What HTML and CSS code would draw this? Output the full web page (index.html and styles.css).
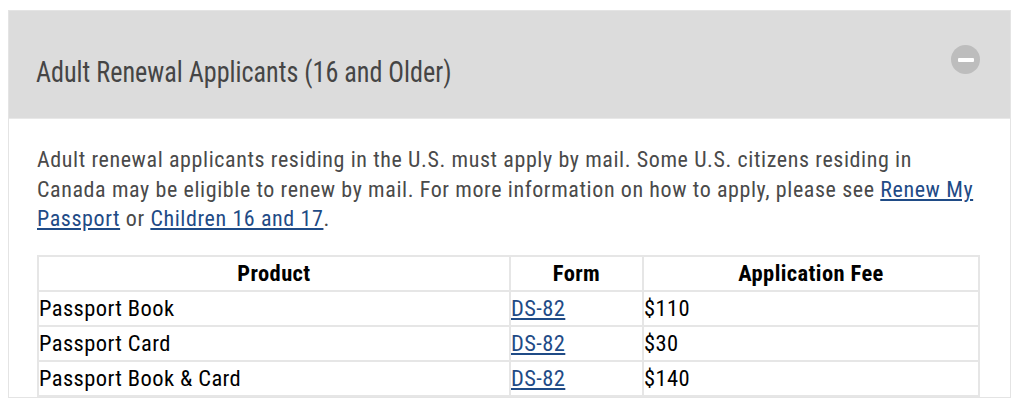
FILE: index.html
```html
<!DOCTYPE html>
<html lang="en">
<head>
<meta charset="utf-8">
<title>Adult Renewal Applicants</title>
<link rel="stylesheet" href="styles.css">
</head>
<body>
<section class="panel">
  <div class="panel-head">
    <h2 class="panel-title">Adult Renewal Applicants (16 and Older)</h2>
    <span class="toggle" aria-label="Collapse"><span class="toggle-bar"></span></span>
  </div>
  <div class="panel-body">
    <p class="intro">Adult renewal applicants residing in the U.S. must apply by mail. Some U.S. citizens residing in Canada may be eligible to renew by mail. For more information on how to apply, please see <a href="#">Renew My Passport</a> or <a href="#">Children 16 and 17</a>.</p>
    <table class="fees">
      <colgroup>
        <col class="c-prod">
        <col class="c-form">
        <col class="c-fee">
      </colgroup>
      <thead>
        <tr><th>Product</th><th>Form</th><th>Application Fee</th></tr>
      </thead>
      <tbody>
        <tr><td>Passport Book</td><td><a href="#">DS-82</a></td><td>$110</td></tr>
        <tr><td>Passport Card</td><td><a href="#">DS-82</a></td><td>$30</td></tr>
        <tr><td>Passport Book &amp; Card</td><td><a href="#">DS-82</a></td><td>$140</td></tr>
      </tbody>
    </table>
  </div>
</section>
</body>
</html>
```

FILE: styles.css
```css
html, body {
  margin: 0;
  padding: 0;
  background: #ffffff;
}

body {
  font-family: "Roboto", "DejaVu Sans Condensed", sans-serif;
  font-stretch: 75%;
}

.panel {
  box-sizing: border-box;
  width: 1003px;
  margin: 10px 0 0 8px;
  border: 1px solid #e4e4e4;
}

.panel-head {
  box-sizing: border-box;
  height: 108px;
  background: #dcdcdc;
  border-bottom: 1px solid #e8e8e8;
  display: flex;
  justify-content: space-between;
  align-items: flex-start;
  padding: 0 30px 0 27px;
}

.panel-title {
  margin: 41px 0 0;
  font-size: 29px;
  line-height: 40px;
  font-weight: 400;
  color: #454545;
  white-space: nowrap;
  transform: scaleX(0.9);
  transform-origin: left center;
}

.toggle {
  margin-top: 34px;
  width: 29px;
  height: 29px;
  border-radius: 50%;
  background: #bdbdbd;
  display: flex;
  align-items: center;
  justify-content: center;
  flex: none;
}

.toggle-bar {
  width: 16px;
  height: 4px;
  background: #ffffff;
  border-radius: 1px;
}

.panel-body {
  padding: 26px 30px 0 28px;
}

.intro {
  margin: 0 0 21px;
  font-size: 22px;
  line-height: 29.5px;
  letter-spacing: 0.6px;
  color: #4a4a4a;
}

a {
  color: #1f4b86;
  text-decoration: underline;
  text-underline-offset: 2px;
}

.fees {
  width: 943px;
  table-layout: fixed;
  border-collapse: collapse;
  font-size: 22.5px;
  line-height: 33px;
  letter-spacing: 0.4px;
  color: #000000;
}

.fees th,
.fees td {
  border: 2px solid #e6e6e6;
  padding: 0;
  text-align: left;
  white-space: nowrap;
}

.fees th {
  text-align: center;
  font-weight: 700;
}

.c-prod { width: 472px; }
.c-form { width: 133px; }
.c-fee { width: auto; }
```
